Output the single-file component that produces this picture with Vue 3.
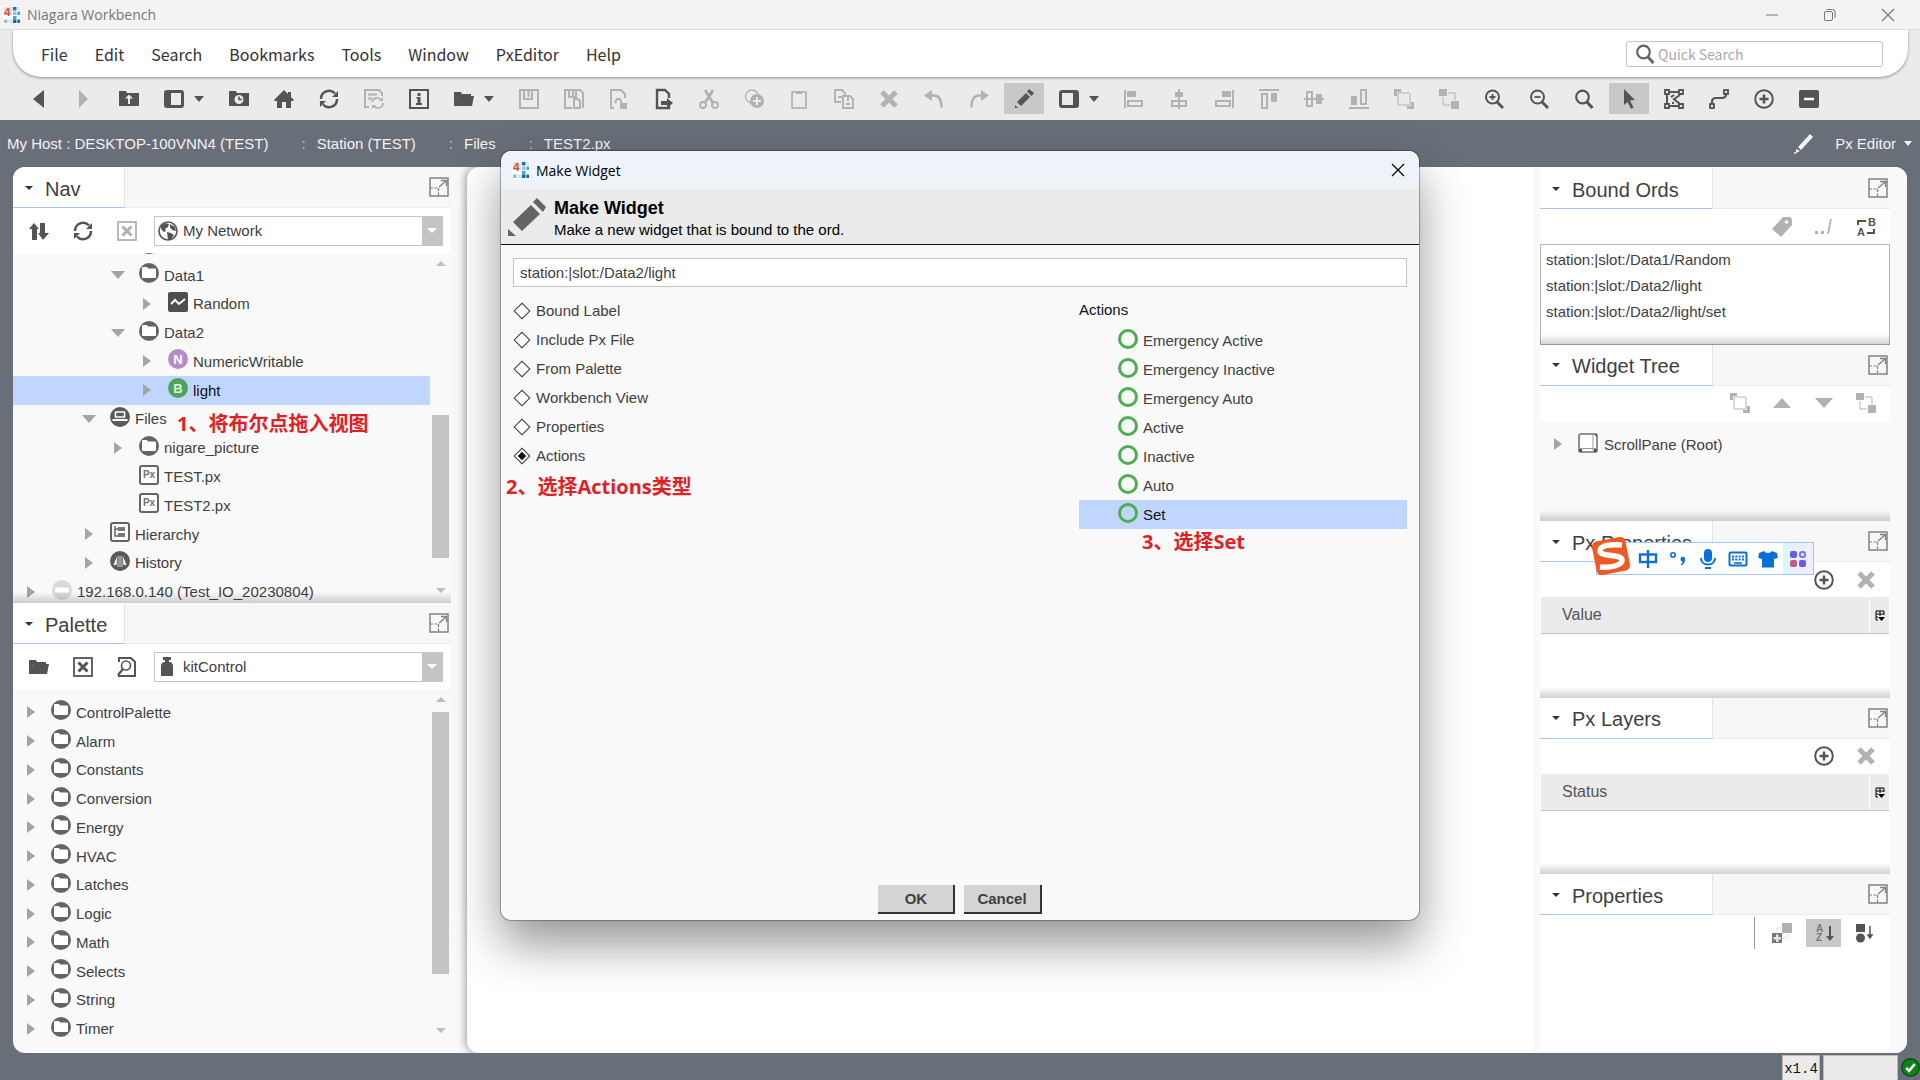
<template>
	<div class="workbench">
		<header class="titlebar">
			<svg class="logo" viewBox="0 0 20 20" v-html="icons.logo"></svg>
			<span class="titlebar-text">Niagara Workbench</span>
			<button class="win-btn" aria-label="Minimize">
				<svg viewBox="0 0 20 20" v-html="icons.minimize"></svg>
			</button>
			<button class="win-btn" aria-label="Restore">
				<svg viewBox="0 0 20 20" v-html="icons.restore"></svg>
			</button>
			<button class="win-btn" aria-label="Close">
				<svg viewBox="0 0 20 20" v-html="icons.close"></svg>
			</button>
		</header>

		<div class="top">
			<nav class="menubar">
				<button v-for="item in menus" :key="item">{{ item }}</button>
				<label class="search">
					<svg class="icon" viewBox="0 0 20 20" v-html="icons.search"></svg>
					<input type="text" placeholder="Quick Search" aria-label="Quick Search" />
				</label>
			</nav>
			<div class="toolbar">
				<template v-for="tool in tools" :key="tool.icon">
					<button
						class="tool"
						:class="{ off: tool.off, pressed: tool.pressed }"
						:aria-label="tool.icon"
					>
						<svg class="icon" viewBox="0 0 20 20" v-html="icons[tool.icon]"></svg>
					</button>
					<button v-if="tool.menu" class="caret-btn" aria-label="More">
						<svg viewBox="0 0 10 6"><path d="M0 0h10L5 6z" fill="currentColor" /></svg>
					</button>
				</template>
			</div>
		</div>

		<div class="locator">
			<template v-for="(part, index) in path" :key="part">
				<span v-if="index" class="sep">:</span>
				<a href="#">{{ part }}</a>
			</template>
			<button class="view-btn">
				<svg class="icon" viewBox="0 0 20 20" v-html="icons.pen"></svg>
				<span>Px Editor</span>
				<svg class="view-caret" viewBox="0 0 8 5"><path d="M0 0h8L4 5z" fill="currentColor" /></svg>
			</button>
		</div>

		<main class="workspace">
			<aside class="left">
				<section class="pane nav-pane">
					<div class="pane-header">
						<button class="tab"><i class="tab-caret"></i>Nav</button>
						<button class="expand" aria-label="Expand">
							<svg class="icon" viewBox="0 0 20 20" v-html="icons.expand"></svg>
						</button>
					</div>
					<div class="pane-tools">
						<button aria-label="Sort"><svg class="icon" viewBox="0 0 20 20" v-html="icons.updown"></svg></button>
						<button aria-label="Refresh"><svg class="icon" viewBox="0 0 20 20" v-html="icons.refresh"></svg></button>
						<button class="off" aria-label="Close"><svg class="icon" viewBox="0 0 20 20" v-html="icons.boxx"></svg></button>
						<label class="combo">
							<svg class="icon" viewBox="0 0 20 20" v-html="icons.globe"></svg>
							<select aria-label="Tree"><option>My Network</option></select>
							<span class="combo-arrow"></span>
						</label>
					</div>
					<div class="list">
						<ul class="tree nav-tree">
							<li
								v-for="node in navTree"
								:key="node.label"
								:class="{ selected: node.selected }"
								:style="{ paddingLeft: 8 + node.level * 29 + 'px' }"
							>
								<span class="twisty" :class="node.state"></span>
								<svg class="icon" viewBox="0 0 20 20" v-html="icons[node.icon]"></svg>
								<span>{{ node.label }}</span>
							</li>
						</ul>
						<div class="scroll">
							<span class="up"></span>
							<span class="thumb nav-thumb"></span>
							<span class="down"></span>
						</div>
					</div>
				</section>
				<section class="pane palette-pane">
					<div class="pane-header">
						<button class="tab"><i class="tab-caret"></i>Palette</button>
						<button class="expand" aria-label="Expand">
							<svg class="icon" viewBox="0 0 20 20" v-html="icons.expand"></svg>
						</button>
					</div>
					<div class="pane-tools">
						<button aria-label="Open"><svg class="icon" viewBox="0 0 20 20" v-html="icons.open"></svg></button>
						<button aria-label="Close palette"><svg class="icon" viewBox="0 0 20 20" v-html="icons.boxx"></svg></button>
						<button aria-label="Find"><svg class="icon" viewBox="0 0 20 20" v-html="icons.finddoc"></svg></button>
						<label class="combo">
							<svg class="icon" viewBox="0 0 20 20" v-html="icons.jar"></svg>
							<select aria-label="Palette"><option>kitControl</option></select>
							<span class="combo-arrow"></span>
						</label>
					</div>
					<div class="list">
						<ul class="tree palette-tree">
							<li v-for="name in palette" :key="name">
								<span class="twisty closed"></span>
								<svg class="icon" viewBox="0 0 20 20" v-html="icons.folder"></svg>
								<span>{{ name }}</span>
							</li>
						</ul>
						<div class="scroll palette-scroll">
							<span class="up"></span>
							<span class="thumb palette-thumb"></span>
							<span class="down"></span>
						</div>
					</div>
				</section>
			</aside>

			<div class="canvas"></div>

			<aside class="right">
				<section v-for="side in sides" :key="side.title" class="side">
					<div class="pane-header">
						<button class="tab"><i class="tab-caret"></i>{{ side.title }}</button>
						<button class="expand" aria-label="Expand">
							<svg class="icon" viewBox="0 0 20 20" v-html="icons.expand"></svg>
						</button>
					</div>
					<div class="side-tools" :class="{ ruled: side.ruled }">
						<button
							v-for="tool in side.tools"
							:key="tool.icon"
							:class="{ off: tool.off, pressed: tool.pressed }"
							:aria-label="tool.icon"
						>
							<svg class="icon" viewBox="0 0 20 20" v-html="icons[tool.icon]"></svg>
						</button>
					</div>
					<ul v-if="side.ords" class="ords">
						<li v-for="ord in side.ords" :key="ord">{{ ord }}</li>
					</ul>
					<div v-else-if="side.root" class="widget-tree">
						<span class="twisty closed"></span>
						<svg class="icon" viewBox="0 0 20 20" v-html="icons.scrollpane"></svg>
						<span>{{ side.root }}</span>
					</div>
					<table v-else-if="side.column">
						<thead>
							<tr>
								<th>{{ side.column }}</th>
								<th class="opts">
									<button aria-label="Table options">
										<svg viewBox="0 0 10 11" v-html="icons.tableopts"></svg>
									</button>
								</th>
							</tr>
						</thead>
					</table>
				</section>
			</aside>
		</main>

		<footer class="statusbar">
			<span class="zoom">x1.4</span>
			<span class="field"></span>
			<svg class="ok-mark" viewBox="0 0 20 20" v-html="icons.okmark"></svg>
		</footer>

		<div class="note note-1">1、将布尔点拖入视图</div>

		<div class="ime">
			<svg class="ime-logo" viewBox="0 0 40 40" v-html="icons.sogou"></svg>
			<button v-for="name in ime" :key="name" :class="name" :aria-label="name">
				<svg class="icon" viewBox="0 0 20 20" v-html="icons[name]"></svg>
			</button>
		</div>

		<div class="dialog" role="dialog" aria-label="Make Widget">
			<div class="dialog-title">
				<svg class="logo" viewBox="0 0 20 20" v-html="icons.logo"></svg>
				<span>Make Widget</span>
				<button class="dialog-close" aria-label="Close">
					<svg viewBox="0 0 20 20" v-html="icons.close"></svg>
				</button>
			</div>
			<div class="dialog-head">
				<svg class="head-icon" viewBox="0 0 40 40" v-html="icons.bigpencil"></svg>
				<div>
					<h1>Make Widget</h1>
					<p>Make a new widget that is bound to the ord.</p>
				</div>
			</div>
			<div class="dialog-body">
				<input v-model="ord" class="ord" type="text" aria-label="Ord" />
				<div class="columns">
					<div class="types">
						<label v-for="type in types" :key="type">
							<input v-model="picked" type="radio" name="type" :value="type" />
							{{ type }}
						</label>
					</div>
					<div class="actions">
						<h2>Actions</h2>
						<ul>
							<li
								v-for="action in actions"
								:key="action"
								:class="{ selected: action === current }"
								@click="current = action"
							>
								<i class="ring"></i>{{ action }}
							</li>
						</ul>
					</div>
				</div>
				<div class="buttons">
					<button>OK</button>
					<button>Cancel</button>
				</div>
			</div>
			<div class="note note-2">2、选择Actions类型</div>
			<div class="note note-3">3、选择Set</div>
		</div>
	</div>
</template>

<script setup>
import { ref } from 'vue'

const ord = ref('station:|slot:/Data2/light')
const picked = ref('Actions')
const current = ref('Set')

const menus = ['File', 'Edit', 'Search', 'Bookmarks', 'Tools', 'Window', 'PxEditor', 'Help']
const path = ['My Host : DESKTOP-100VNN4 (TEST)', 'Station (TEST)', 'Files', 'TEST2.px']
const types = ['Bound Label', 'Include Px File', 'From Palette', 'Workbench View', 'Properties', 'Actions']
const actions = [
	'Emergency Active',
	'Emergency Inactive',
	'Emergency Auto',
	'Active',
	'Inactive',
	'Auto',
	'Set',
]
const palette = [
	'ControlPalette',
	'Alarm',
	'Constants',
	'Conversion',
	'Energy',
	'HVAC',
	'Latches',
	'Logic',
	'Math',
	'Selects',
	'String',
	'Timer',
]
const ime = ['zhong', 'punct', 'mic', 'keyboard', 'shirt', 'apps']

const tools = [
	{ icon: 'back' },
	{ icon: 'forward', off: true },
	{ icon: 'uplevel' },
	{ icon: 'sidebar', menu: true },
	{ icon: 'recent' },
	{ icon: 'home' },
	{ icon: 'refresh' },
	{ icon: 'docrefresh', off: true },
	{ icon: 'info' },
	{ icon: 'open', menu: true },
	{ icon: 'save', off: true },
	{ icon: 'savebog', off: true },
	{ icon: 'export', off: true },
	{ icon: 'exportdoc' },
	{ icon: 'cut', off: true },
	{ icon: 'duplicate', off: true },
	{ icon: 'paste', off: true },
	{ icon: 'copy', off: true },
	{ icon: 'delete', off: true },
	{ icon: 'undo', off: true },
	{ icon: 'redo', off: true },
	{ icon: 'pencil', pressed: true },
	{ icon: 'rightbar', menu: true },
	{ icon: 'alignleft', off: true },
	{ icon: 'aligncenter', off: true },
	{ icon: 'alignright', off: true },
	{ icon: 'aligntop', off: true },
	{ icon: 'alignmiddle', off: true },
	{ icon: 'alignbottom', off: true },
	{ icon: 'tofront', off: true },
	{ icon: 'toback', off: true },
	{ icon: 'zoomin' },
	{ icon: 'zoomout' },
	{ icon: 'search' },
	{ icon: 'pointer', pressed: true },
	{ icon: 'polygon' },
	{ icon: 'curve' },
	{ icon: 'add' },
	{ icon: 'remove' },
]

const navTree = [
	{ label: '', icon: 'folder', level: 3 },
	{ label: 'Data1', icon: 'folder', level: 3, state: 'opened' },
	{ label: 'Random', icon: 'wave', level: 4, state: 'closed' },
	{ label: 'Data2', icon: 'folder', level: 3, state: 'opened' },
	{ label: 'NumericWritable', icon: 'numeric', level: 4, state: 'closed' },
	{ label: 'light', icon: 'bool', level: 4, state: 'closed', selected: true },
	{ label: 'Files', icon: 'files', level: 2, state: 'opened' },
	{ label: 'nigare_picture', icon: 'folder', level: 3, state: 'closed' },
	{ label: 'TEST.px', icon: 'px', level: 3 },
	{ label: 'TEST2.px', icon: 'px', level: 3 },
	{ label: 'Hierarchy', icon: 'hierarchy', level: 2, state: 'closed' },
	{ label: 'History', icon: 'history', level: 2, state: 'closed' },
	{ label: '192.168.0.140 (Test_IO_20230804)', icon: 'host', level: 0, state: 'closed' },
]

const sides = [
	{
		title: 'Bound Ords',
		tools: [{ icon: 'tag', off: true }, { icon: 'relative', off: true }, { icon: 'replace' }],
		ords: ['station:|slot:/Data1/Random', 'station:|slot:/Data2/light', 'station:|slot:/Data2/light/set'],
	},
	{
		title: 'Widget Tree',
		tools: [
			{ icon: 'tofront', off: true },
			{ icon: 'moveup', off: true },
			{ icon: 'movedown', off: true },
			{ icon: 'toback', off: true },
		],
		root: 'ScrollPane (Root)',
	},
	{ title: 'Px Properties', tools: [{ icon: 'add' }, { icon: 'delete', off: true }], column: 'Value' },
	{ title: 'Px Layers', tools: [{ icon: 'add' }, { icon: 'delete', off: true }], column: 'Status' },
	{
		title: 'Properties',
		ruled: true,
		tools: [{ icon: 'addslot', off: true }, { icon: 'sortaz', pressed: true }, { icon: 'sorttype' }],
	},
]

const icons = {
	logo: '<rect width="20" height="20" fill="#fff"/><path d="M11 1h4v4h-4z" fill="#1478b8"/><path d="M1 1h9v9H1z" fill="#e3dcdc"/><path d="M11 6h4v4h-4zM1 15h4v4H1z" fill="#8cc3e0"/><path d="M16 1h3v4h-3zM6 15h4v4H6z" fill="#d5e6ef"/><path d="M16 6h3v4h-3zM11 11h4v4h-4z" fill="#4fa3d0"/><path d="M11 15h4v4h-4zM16 15h3v4h-3z" fill="#1068a8"/><text x="1" y="11" font-family="Liberation Sans" font-size="13" font-weight="bold" fill="#d84b4b">4</text>',
	minimize: '<path d="M4 10h12" stroke="#777" fill="none"/>',
	restore: '<g fill="none" stroke="#777"><rect x="4.500" y="6.500" width="8" height="9" rx="1.500"/><path d="M6.500 4.500h6a2.500 2.500 0 0 1 2.500 2.500v6"/></g>',
	close: '<path d="M4 4l12 12M16 4L4 16" stroke="currentColor" stroke-width="1.200" fill="none"/>',
	search: '<circle cx="8.500" cy="8" r="6.300" fill="none" stroke="currentColor" stroke-width="2.200"/><path d="M13 13l5.500 6" stroke="currentColor" stroke-width="3"/>',
	back: '<path d="M15 1v18L4 10z" fill="currentColor"/>',
	forward: '<path d="M5 1v18l9-9z" fill="currentColor"/>',
	uplevel: '<path d="M0 2h7l1 2h12v13H0z" fill="currentColor"/><path d="M10 5.500l4 4h-3V15H9V9.500H6z" fill="#ebebeb"/>',
	sidebar: '<rect x="1.500" y="2.500" width="17" height="15" rx="1.500" fill="none" stroke="currentColor" stroke-width="3"/><path d="M2 2h5v16H2z" fill="currentColor"/>',
	rightbar: '<rect x="1.500" y="2.500" width="17" height="15" rx="1.500" fill="none" stroke="currentColor" stroke-width="3"/><path d="M14 2h5v16h-5z" fill="currentColor"/>',
	recent: '<path d="M0 2h7l1 2h12v13H0z" fill="currentColor"/><circle cx="10" cy="10.500" r="4.500" fill="#ebebeb"/><path d="M10 7.500v3h3" stroke="currentColor" stroke-width="1.500" fill="none"/>',
	home: '<path d="M10 1l4 4V3h3v5l3 3-1 1h-2v7h-5v-6H8v6H3v-7H1l-1-1z" fill="currentColor"/>',
	refresh: '<g fill="none" stroke="currentColor" stroke-width="2.500"><path d="M2 10a8 8 0 0 1 14-5.500"/><path d="M18 10a8 8 0 0 1-14 5.500"/></g><path d="M19 2v6h-6zM1 18v-6h6z" fill="currentColor"/>',
	docrefresh: '<path d="M5 18H1V1h14l3 3v3M4 5.500h9M4 9.500h4" fill="none" stroke="currentColor" stroke-width="2"/><path d="M8 13a5 5 0 0 1 9-2M19 14a5 5 0 0 1-9 3" fill="none" stroke="currentColor" stroke-width="1.800"/><path d="M19 8v4h-4zM8 20v-4h4z" fill="currentColor"/>',
	info: '<rect x="1" y="1" width="18" height="18" fill="none" stroke="currentColor" stroke-width="2"/><path d="M8.500 4h3v3h-3zM7.500 8h4v6H13v2H7v-2h1.500v-4.500h-1z" fill="currentColor"/>',
	open: '<path d="M0 3h7l1 2h9v2H4L2 17H0z" fill="currentColor"/><path d="M4 7h16l-2 10H1z" fill="currentColor"/>',
	save: '<path d="M1 1h18v18H1zM5 1v9h8V1M9.500 2v6" fill="none" stroke="currentColor" stroke-width="2"/>',
	savebog: '<path d="M8 19H1V1h15l3 3v15M5 1v7h7V1M9 2v5" fill="none" stroke="currentColor" stroke-width="2"/><path d="M10 10h4l2 2v7h-6z" fill="none" stroke="currentColor" stroke-width="2"/>',
	export: '<path d="M5 19H2V1h10l4 4v4M6 14l2-4h3l2 5" fill="none" stroke="currentColor" stroke-width="2"/><path d="M11 14h7v6h-7z" fill="currentColor"/>',
	exportdoc: '<path d="M15 9V5l-4-4H3v18h12v-3" fill="none" stroke="currentColor" stroke-width="2.400"/><path d="M7 12h6V9l6 5-6 5v-3H7z" fill="currentColor"/>',
	cut: '<g fill="none" stroke="currentColor" stroke-width="2"><circle cx="4" cy="16" r="3"/><circle cx="16" cy="16" r="3"/><path d="M6 14l8-13M14 14L6 1" stroke-width="2.800"/></g>',
	duplicate: '<circle cx="8" cy="7.500" r="6.500" fill="none" stroke="currentColor" stroke-width="1.300"/><circle cx="13" cy="12" r="7" fill="currentColor"/><path d="M13 8v8M9 12h8" stroke="#ebebeb" stroke-width="2"/>',
	paste: '<rect x="3" y="3" width="14" height="16" fill="none" stroke="currentColor" stroke-width="1.700"/><path d="M7 2h6v3H7z" fill="currentColor"/>',
	copy: '<g fill="none" stroke="currentColor" stroke-width="1.800"><path d="M7 13H1V1h7l3 3v3"/><path d="M9 7h7l3 3v9H9zM14 7v5"/><path d="M4 8h4M12 15h4"/></g>',
	delete: '<path d="M3 3l14 14M17 3L3 17" stroke="currentColor" stroke-width="5" fill="none"/>',
	undo: '<path d="M4 6.500h6c5 0 7.500 4 7.500 12" fill="none" stroke="currentColor" stroke-width="2.400"/><path d="M8 1v11L0 6.500z" fill="currentColor"/>',
	redo: '<path d="M16 6.500h-6c-5 0-7.500 4-7.500 12" fill="none" stroke="currentColor" stroke-width="2.400"/><path d="M12 1v11l8-5.500z" fill="currentColor"/>',
	pencil: '<path d="M12 4l4 4-9 9-4-4zM13 2.500L15 0l5 4-2.500 3zM1 19v-3l3 3z" fill="currentColor"/>',
	pen: '<path d="M16 0l3 3L7 16l-3-3z" fill="currentColor"/><path d="M2 15l4 2-4 2z" fill="currentColor"/><circle cx="1" cy="19" r="1" fill="currentColor"/>',
	bigpencil: '<path d="M24 8l9 9-18 17-9-9zM26 5l4-4 9 9-3 5zM1 39v-7l8 7z" fill="currentColor"/>',
	alignleft: '<path d="M0 1h2v18H0zM3 2h9v6H3z" fill="currentColor"/><path d="M4 12h14v5H4z" fill="none" stroke="currentColor" stroke-width="2"/>',
	aligncenter: '<path d="M9 0h2v20H9zM6 3h8v5H6z" fill="currentColor"/><path d="M3 12h14v5H3z" fill="none" stroke="currentColor" stroke-width="2"/>',
	alignright: '<path d="M18 1h2v18h-2zM8 2h9v6H8z" fill="currentColor"/><path d="M2 12h14v5H2z" fill="none" stroke="currentColor" stroke-width="2"/>',
	aligntop: '<path d="M0 0h20v2H0zM12 4h6v9h-6z" fill="currentColor"/><path d="M3 5h5v14H3z" fill="none" stroke="currentColor" stroke-width="2"/>',
	alignmiddle: '<path d="M0 9h20v2H0zM12 5h6v10h-6z" fill="currentColor"/><path d="M3 3h5v14H3z" fill="none" stroke="currentColor" stroke-width="2"/>',
	alignbottom: '<path d="M0 18h20v2H0zM2 7h6v9H2z" fill="currentColor"/><path d="M12 1h5v14h-5z" fill="none" stroke="currentColor" stroke-width="2"/>',
	tofront: '<path d="M0 0h7v3H3v4H0zM20 20h-7v-3h4v-4h3z" fill="currentColor"/><rect x="4" y="4" width="12" height="12" rx="1" fill="none" stroke="currentColor"/>',
	toback: '<path d="M0 0h8v7H0zM12 12h8v8h-8z" fill="currentColor"/><path d="M9 4h7v7M4 8v8h7" fill="none" stroke="currentColor"/>',
	zoomin: '<circle cx="8.500" cy="8" r="6.500" fill="none" stroke="currentColor" stroke-width="2"/><path d="M13 13l6 6" stroke="currentColor" stroke-width="2.800"/><path d="M8.500 5v6M5.500 8h6" stroke="currentColor" stroke-width="1.800"/>',
	zoomout: '<circle cx="8.500" cy="8" r="6.500" fill="none" stroke="currentColor" stroke-width="2"/><path d="M13 13l6 6" stroke="currentColor" stroke-width="2.800"/><path d="M5.500 8h6" stroke="currentColor" stroke-width="1.800"/>',
	pointer: '<path d="M5 0l11 11-5 .5 3.500 7-2.500 1.200L8.500 13 5 16z" fill="currentColor"/>',
	polygon: '<g fill="none" stroke="currentColor" stroke-width="2"><path d="M3 5v11M5 3h10M5 17h10M16 6l-6 4 6 5"/><path d="M7 8l3-2M8 14h2"/><path d="M1 1h4v4H1zM15 1h4v4h-4zM1 15h4v4H1zM15 15h4v4h-4z" stroke-width="1.800"/></g>',
	curve: '<g fill="none" stroke="currentColor"><path d="M3 15c0-4 0-6 4-6h5c5 0 5-2 5-5" stroke-width="2.200"/><rect x="1" y="15" width="4" height="4" stroke-width="1.800"/><rect x="15" y="1" width="4" height="4" stroke-width="1.800"/></g>',
	add: '<circle cx="10" cy="10" r="8.800" fill="none" stroke="currentColor" stroke-width="2"/><path d="M10 5.500v9M5.500 10h9" stroke="currentColor" stroke-width="2.500"/>',
	remove: '<rect x="0" y="1" width="20" height="18" rx="2" fill="currentColor"/><path d="M5 10h10" stroke="#fff" stroke-width="2.500"/>',
	expand: '<g fill="none" stroke="#828282"><rect x="1" y="1" width="18" height="18" stroke-width="1.500"/><path d="M10 10l7-6M12 3.500h5.500V9" stroke-width="1.300"/><path d="M1 11h9M9.500 11v8" stroke-dasharray="3 1.500" stroke-width="1.200"/></g>',
	updown: '<path d="M5 2l5 6H8v11H3V8H0zM11 2h5v10h4l-6 7-5-7h2z" fill="currentColor"/>',
	boxx: '<rect x="1" y="1" width="18" height="18" fill="none" stroke="currentColor" stroke-width="1.800"/><path d="M5.500 5.500l9 9M14.500 5.500l-9 9" stroke="currentColor" stroke-width="3"/>',
	globe: '<circle cx="10" cy="10" r="9" fill="#fff" stroke="currentColor" stroke-width="1.600"/><path d="M3 5l4-3 4 1-1 3-3 2 1 2-2 1-3-3zM12 3l5 3 1 4-4-1-2-3zM9 11l4 1 3 2-3 4-3 1z" fill="currentColor"/>',
	finddoc: '<path d="M2 5V1h12l4 4v14h-6" fill="none" stroke="currentColor" stroke-width="2"/><circle cx="9" cy="8.500" r="4.500" fill="none" stroke="currentColor" stroke-width="1.600"/><path d="M6 12l-5 6" stroke="currentColor" stroke-width="2.200"/><path d="M1 19h12" stroke="currentColor" stroke-width="2"/>',
	jar: '<path d="M5 0h8v3h-2v2c3 0 4 2 4 4v10H3V9c0-2 1-4 4-4V3H5z" fill="currentColor"/>',
	folder: '<circle cx="10" cy="10" r="10" fill="#646464"/><path d="M3.500 4.500h4.500l1 1.500h7.500v8.500h-13z" fill="#fff" stroke="#fff" stroke-linejoin="round" stroke-width="1"/>',
	wave: '<rect width="20" height="20" rx="2" fill="#4e4e4e"/><path d="M3 12l4-4 4 4 6-5" fill="none" stroke="#fff" stroke-width="2"/>',
	numeric: '<circle cx="10" cy="10" r="10" fill="#b28dca"/><text x="10" y="14.500" text-anchor="middle" font-family="Liberation Sans" font-weight="bold" font-size="13" fill="#fff">N</text>',
	bool: '<circle cx="10" cy="10" r="10" fill="#4da35c"/><text x="10" y="14.500" text-anchor="middle" font-family="Liberation Sans" font-weight="bold" font-size="13" fill="#d9f3dc">B</text>',
	files: '<circle cx="10" cy="10" r="10" fill="#5b5b5b"/><path d="M5.500 5h9v5h-9z" fill="none" stroke="#fff" stroke-width="1.500"/><path d="M2.500 12h15v2h-15z" fill="#fff"/>',
	px: '<rect x="1" y="1" width="18" height="18" rx="2" fill="#fff" stroke="#646464" stroke-width="2"/><text x="10" y="13" text-anchor="middle" font-family="Liberation Sans" font-weight="bold" font-size="10" fill="#707070">Px</text>',
	hierarchy: '<rect x="1" y="1" width="18" height="18" rx="2" fill="#fff" stroke="#646464" stroke-width="2"/><path d="M5 4v10h3M5 7h3" fill="none" stroke="#646464" stroke-width="1.500"/><path d="M8 5h7v4H8zM8 11h7v4H8z" fill="#777"/>',
	history: '<circle cx="10" cy="10" r="10" fill="#5b5b5b"/><path d="M7.500 4.500L3.500 14h3zM12.500 4.500l4 9.500h-3z" fill="#fff"/><path d="M8 5h4l1 11H7z" fill="#999"/>',
	host: '<circle cx="10" cy="10" r="10" fill="#dadada"/><rect x="3" y="7.500" width="14" height="5" rx="1" fill="#fff"/>',
	scrollpane: '<rect x="1" y="1" width="18" height="18" rx="1.500" fill="#fff" stroke="#707070" stroke-width="1.600"/><path d="M15 1v18M1 15.500h18" stroke="#999" stroke-width="1"/><path d="M16 1h3v3zM1 16h3v3H1zM16 16h3v3h-3z" fill="#555"/>',
	tag: '<path d="M11 0h7l2 2v6L9 20l-9-8z" fill="currentColor"/><circle cx="14.500" cy="5" r="1.800" fill="#fff"/>',
	relative: '<path d="M1 14h3v3H1zM7 14h3v3H7z" fill="currentColor"/><path d="M17 2l-3 15" stroke="currentColor" stroke-width="1.800"/>',
	replace: '<path d="M2 8V4h8M11 16h7v-4" fill="none" stroke="currentColor" stroke-width="2"/><g font-family="Liberation Sans" font-weight="bold" font-size="11" fill="currentColor"><text x="12" y="9">B</text><text x="1" y="19">A</text></g>',
	moveup: '<path d="M1 15h18L10 5z" fill="currentColor"/>',
	movedown: '<path d="M1 5h18l-9 10z" fill="currentColor"/>',
	addslot: '<path d="M10 0h10v10H10z" fill="currentColor"/><path d="M5 9V5h4M15 11v4h-4" fill="none" stroke="#ddd"/><path d="M0 10h10v10H0z" fill="#777"/><path d="M4 11.500h2.500v2.500H9v2.500H6.500V19H4v-2.500H1.500V14H4z" fill="#e6e2f2"/>',
	sortaz: '<g font-family="Liberation Sans" font-weight="bold" font-size="10" fill="#777"><text x="2" y="9">A</text><text x="2" y="18">Z</text></g><path d="M15 3v10h-3l4 5 4-5h-3V3z" fill="#555"/>',
	sorttype: '<path d="M0 1h9v8H0z" fill="currentColor"/><circle cx="4.500" cy="15" r="4.500" fill="currentColor"/><path d="M14 3v9M12 12l2 3 2-3z" stroke="currentColor" stroke-width="1.500" fill="currentColor"/>',
	tableopts: '<path d="M1 10V1h8v4M1 4h8M5 1v5M1 7h2M1 10h2" fill="none" stroke="#000"/><path d="M3 7h7l-3.500 4z" fill="#000"/>',
	okmark: '<circle cx="10" cy="10" r="9.200" fill="#0c8416" stroke="#0b4d10" stroke-width="1.500"/><path d="M5.500 10.500l3 3 6-7" fill="none" stroke="#fff" stroke-width="2.600"/>',
	sogou: '<rect x="3" y="3" width="34" height="34" rx="5" fill="#f05a22" transform="rotate(-11 20 20)"/><path d="M31 9C20 8 9 9 9 15c0 6 22 3 22 9 0 5-10 8-22 7" fill="none" stroke="#fff" stroke-width="5.500"/>',
	zhong: '<path d="M10 1v18" stroke="#0a6fd6" stroke-width="2.400"/><rect x="2" y="5.500" width="16" height="7.500" fill="none" stroke="#0a6fd6" stroke-width="2.400"/>',
	punct: '<circle cx="5" cy="6" r="2.200" fill="none" stroke="#0a6fd6" stroke-width="1.600"/><path d="M12.500 10a2.300 2.300 0 0 1 4.600 0c0 3-1 5-3.600 6.500l-.8-.8c1.200-1 1.800-2 1.800-3.200-1.200 0-2-1.200-2-2.500z" fill="#0a6fd6"/>',
	mic: '<rect x="6" y="0" width="8" height="13" rx="4" fill="#0a6fd6"/><path d="M3 9c0 4 3 6.500 7 6.500S17 13 17 9M7 19h6" fill="none" stroke="#0a6fd6" stroke-width="2"/>',
	keyboard: '<rect x="1.500" y="3.500" width="17" height="13" rx="1.500" fill="none" stroke="#0a6fd6" stroke-width="2"/><path d="M4 7.500h12M4 10.500h12" stroke="#0a6fd6" stroke-width="1.800" stroke-dasharray="2 1.300"/><path d="M6 14h8" stroke="#0a6fd6" stroke-width="1.600"/>',
	shirt: '<path d="M6 2c2 2.500 6 2.500 8 0l5 2 .8 5-3.800 1v8.500H4V10L.2 9 1 4z" fill="#0a6fd6"/>',
	apps: '<rect x="2" y="2" width="7" height="7" rx="2" fill="#6a5ae8"/><rect x="2" y="11" width="7" height="7" rx="2" fill="#c25a8c"/><rect x="11" y="11" width="7" height="7" rx="2" fill="#6a5ae8"/><rect x="12" y="3" width="5" height="5" rx="2" fill="none" stroke="#6a78f0" stroke-width="2"/>',
}
</script>

<style>
body {
	margin: 0;
}
</style>

<style scoped>
.workbench {
	position: relative;
	display: flex;
	flex-direction: column;
	height: 100vh;
	overflow: hidden;
	background: #696f79;
	color: #404040;
	font-family: 'Liberation Sans', Arial, sans-serif;
	font-size: 15px;
}

button,
input,
select {
	margin: 0;
	padding: 0;
	border: 0;
	background: none;
	color: inherit;
	font: inherit;
}

ul {
	margin: 0;
	padding: 0;
	list-style: none;
}

a {
	color: inherit;
	text-decoration: none;
}

.icon {
	display: block;
	flex: none;
	width: 20px;
	height: 20px;
	overflow: visible;
}

.off {
	color: #b2b2b2;
}

/* Title bar */
.titlebar {
	display: flex;
	align-items: center;
	height: 29px;
	padding: 0 12px 0 3px;
	background: #f3f3f3;
	border-bottom: 1px solid #dcdcdc;
	color: #777;
	font-family: 'Open Sans', sans-serif;
	font-size: 14px;
}

.logo {
	width: 18px;
	height: 18px;
}

.titlebar-text {
	flex: 1;
	margin-left: 6px;
}

.win-btn {
	width: 40px;
	height: 28px;
	margin-left: 18px;
}

.win-btn svg {
	width: 20px;
	height: 20px;
	vertical-align: middle;
}

/* Menu and toolbar */
.top {
	padding: 0 12px 0 13px;
	background: #ebebeb;
}

.menubar {
	display: flex;
	align-items: center;
	gap: 27px;
	height: 47px;
	padding: 0 25px 0 28px;
	background: #fff;
	border-radius: 0 0 28px 28px;
	box-shadow: 0 1px 3px rgba(0, 0, 0, 0.4);
	clip-path: inset(0 -6px -6px -6px);
	font-family: 'Noto Sans CJK SC', sans-serif;
	font-size: 16px;
	color: #333;
}

.search {
	display: flex;
	align-items: center;
	gap: 3px;
	box-sizing: border-box;
	width: 257px;
	height: 26px;
	margin: 0 0 0 auto;
	padding: 0 8px;
	border: 1px solid #c4c4c4;
	border-radius: 3px;
	color: #646464;
}

.search input {
	flex: 1;
	min-width: 0;
	outline: none;
	font-size: 14px;
}

.search input::placeholder {
	color: #aaa;
	opacity: 1;
}

.toolbar {
	display: flex;
	align-items: center;
	height: 43px;
	padding: 0 6px;
	color: #545454;
}

.tool {
	display: grid;
	place-items: center;
	width: 40px;
	height: 31px;
	margin-right: 5px;
}

.pressed {
	background: #c8c8c8;
}

.caret-btn {
	width: 20px;
	height: 31px;
	margin-left: -5px;
	margin-right: 5px;
	text-align: left;
}

.caret-btn svg {
	display: block;
	width: 10px;
	height: 6px;
}

/* Locator bar */
.locator {
	display: flex;
	align-items: center;
	height: 47px;
	padding: 0 8px 0 7px;
	color: #f2f2f2;
}

.sep {
	margin: 0 11px 0 33px;
	color: #c8c8c8;
}

.view-btn {
	display: flex;
	align-items: center;
	margin-left: auto;
}

.view-btn span {
	margin: 0 8px 0 21px;
}

.view-caret {
	width: 8px;
	height: 5px;
}

/* Workspace */
.workspace {
	display: grid;
	flex: 1;
	grid-template-columns: 454px 1fr 374px;
	min-height: 0;
	margin: 0 13px;
	overflow: hidden;
	background: #f9f9f9;
	border-radius: 12px;
}

.left {
	display: flex;
	flex-direction: column;
	min-height: 0;
	padding-right: 16px;
}

.canvas {
	background: #fff;
	border-radius: 12px 0 0 12px;
	box-shadow: -1px 0 9px rgba(0, 0, 0, 0.4);
}

.right {
	position: relative;
	display: grid;
	grid-template-rows: repeat(5, minmax(0, 1fr));
	padding: 1px 17px 2px 7px;
	background: #f9f9f9;
}

.pane {
	display: flex;
	flex-direction: column;
	min-height: 0;
}

.nav-pane {
	flex: 436 1 0;
}

.palette-pane {
	flex: 450 1 0;
}

.pane-header {
	display: flex;
	align-items: flex-start;
	justify-content: space-between;
	box-sizing: border-box;
	flex: none;
	height: 41px;
	padding-right: 2px;
	background: #f7f7f7;
	border-bottom: 1px solid #ececec;
	border-radius: 12px 0 0 0;
}

.tab {
	display: flex;
	align-items: center;
	box-sizing: border-box;
	width: 112px;
	height: 41px;
	padding: 4px 0 0 12px;
	background: #fff;
	border-right: 1px solid #e4e4e4;
	border-bottom: 1px solid #a9c6ea;
	border-radius: 12px 0 0 0;
	color: #404040;
	font-size: 20px;
}

.right .tab {
	width: 173px;
}

.tab-caret {
	margin: -3px 12px 0 0;
	border: 4px solid transparent;
	border-top-color: #333;
	border-bottom: 0;
}

.expand {
	margin-top: 10px;
}

.pane-tools {
	display: flex;
	align-items: center;
	gap: 24px;
	flex: none;
	height: 45px;
	padding: 0 8px 0 16px;
	background: #fff;
	color: #545454;
}

.pane-tools .off {
	color: #b2b2b2;
}

.combo {
	display: flex;
	align-items: center;
	box-sizing: border-box;
	flex: 1;
	height: 30px;
	margin-left: -7px;
	padding-left: 3px;
	border: 1px solid #c4c4c4;
	background: #fff;
}

.combo select {
	flex: 1;
	align-self: stretch;
	padding-left: 5px;
	appearance: none;
	outline: none;
	color: #404040;
}

.combo-arrow {
	display: grid;
	place-items: center;
	width: 20px;
	height: 28px;
	background: #c4c4c4;
}

.combo-arrow::before {
	content: '';
	border: 5px solid transparent;
	border-top-color: #fff;
	border-bottom: 0;
}

.list {
	display: flex;
	flex: 1;
	min-height: 0;
	overflow: hidden;
	position: relative;
}

.nav-pane .list::after,
.side:not(:last-child)::after {
	content: '';
	position: absolute;
	left: 0;
	right: 0;
	bottom: 0;
	height: 11px;
	background: linear-gradient(rgba(0, 0, 0, 0), rgba(0, 0, 0, 0.18));
}

.tree {
	display: grid;
	grid-auto-rows: minmax(0, 1fr);
	flex: 1;
}

.nav-tree {
	margin: -21px 0 -3px;
}

.palette-tree {
	padding: 9px 0 10px;
}

.tree li {
	display: flex;
	align-items: center;
	padding-left: 8px;
	white-space: nowrap;
}

.tree li .icon {
	margin: 0 5px 4px 10px;
}

.nav-tree li .icon {
	margin-left: 11px;
}

.selected {
	background: #c1d6ff;
	color: #111;
}

.twisty {
	display: grid;
	place-items: center;
	flex: none;
	width: 20px;
}

.closed::before {
	content: '';
	border: 6px solid transparent;
	border-left: 8px solid #a4a4a4;
	border-right: 0;
}

.opened::before {
	content: '';
	border: 7px solid transparent;
	border-top: 8px solid #a4a4a4;
	border-bottom: 0;
}

.scroll {
	display: flex;
	flex-direction: column;
	align-items: center;
	width: 21px;
	padding: 8px 0 10px;
}

.palette-scroll {
	padding-bottom: 20px;
}

.up {
	border: 5px solid transparent;
	border-top: 0;
	border-bottom-color: #bdbdbd;
}

.down {
	margin-top: auto;
	border: 5px solid transparent;
	border-bottom: 0;
	border-top-color: #bdbdbd;
}

.thumb {
	width: 17px;
	background: #c4c4c4;
}

.nav-thumb {
	height: 43%;
	margin-top: 149px;
}

.palette-thumb {
	height: 78%;
	margin-top: 10px;
}

/* Right side bars */
.side {
	position: relative;
	display: flex;
	flex-direction: column;
	background: #fff;
}

.side-tools {
	display: flex;
	align-items: center;
	justify-content: flex-end;
	gap: 7px;
	flex: none;
	height: 35px;
	padding-right: 7px;
	color: #545454;
}

.side-tools button {
	display: grid;
	place-items: center;
	width: 35px;
	height: 28px;
}

.side-tools .off {
	color: #b2b2b2;
}

.ruled::before {
	content: '';
	width: 1px;
	height: 32px;
	margin-right: 2px;
	background: #999;
}

.ords {
	flex: 1;
	padding: 2px 5px;
	border: 1px solid #b8b8b8;
	line-height: 26px;
}

.widget-tree {
	display: flex;
	align-items: flex-start;
	gap: 6px;
	flex: 1;
	padding: 12px 8px;
	line-height: 20px;
	background: #f9f9f9;
}

.widget-tree .twisty {
	height: 22px;
	margin-right: 4px;
}

.widget-tree span:last-child {
	margin-top: 2px;
}

table {
	width: 100%;
	padding: 0 1px;
	border-spacing: 0;
}

th {
	height: 36px;
	padding: 0 0 0 21px;
	background: #ebebeb;
	border-bottom: 1px solid #c2c2b8;
	color: #555;
	font-size: 16px;
	font-weight: normal;
	text-align: left;
}

th.opts {
	width: 19px;
	padding: 0;
	border-left: 1px solid #fff;
	text-align: center;
}

th svg {
	display: block;
	width: 10px;
	height: 11px;
}

th button {
	vertical-align: middle;
}

/* Status bar */
.statusbar {
	display: flex;
	align-items: flex-end;
	justify-content: flex-end;
	gap: 3px;
	flex: none;
	height: 27px;
}

.zoom,
.field {
	box-sizing: border-box;
	height: 25px;
	background: #ebebeb;
	border: 1px solid #bbb;
	border-bottom: 0;
}

.zoom {
	width: 38px;
	color: #111;
	font: 14px/26px 'Liberation Mono', monospace;
	text-align: center;
}

.field {
	width: 75px;
}

.ok-mark {
	width: 19px;
	height: 19px;
	margin-bottom: 3px;
}

/* Tutorial notes */
.note {
	position: absolute;
	color: #e01f26;
	font: bold 20px/28px 'Open Sans', 'Noto Sans CJK SC', sans-serif;
	white-space: nowrap;
}

.note-1 {
	left: 177px;
	top: 410px;
}

.note-2 {
	left: 5px;
	top: 322px;
}

.note-3 {
	left: 641px;
	top: 377px;
}

/* Input method bar */
.ime {
	position: absolute;
	top: 542px;
	right: 106px;
	display: flex;
	align-items: center;
	box-sizing: border-box;
	height: 33px;
	background: #fff;
	border: 1px solid #a9c6ea;
}

.ime-logo {
	width: 40px;
	height: 40px;
	margin: -5px 2px 0 -6px;
}

.ime button {
	display: grid;
	place-items: center;
	width: 30px;
	height: 31px;
}

.ime .apps {
	background: linear-gradient(90deg, #d8f6fa, #f6ecfb);
}

/* Dialog */
.dialog {
	position: absolute;
	top: 151px;
	bottom: 160px;
	left: 50%;
	display: flex;
	flex-direction: column;
	width: 918px;
	transform: translateX(-50%);
	background: #f9f9f9;
	border-radius: 10px;
	box-shadow:
		0 0 1px 1px rgba(0, 0, 0, 0.3),
		0 24px 48px rgba(0, 0, 0, 0.42);
}

.dialog-title {
	display: flex;
	align-items: center;
	gap: 6px;
	height: 38px;
	padding: 0 11px;
	background: #eef3f9;
	border-radius: 10px 10px 0 0;
	color: #000;
	font-family: 'Open Sans', sans-serif;
	font-size: 14px;
}

.dialog-close {
	width: 20px;
	height: 20px;
	margin-left: auto;
}

.dialog-close svg {
	display: block;
}

.dialog-head {
	display: flex;
	align-items: flex-start;
	gap: 7px;
	height: 47px;
	padding: 8px 6px 0;
	background: #ebebeb;
	border-bottom: 1px solid #111;
	color: #000;
}

.head-icon {
	width: 40px;
	height: 40px;
	color: #646464;
}

h1 {
	margin: 0;
	font-size: 18px;
	line-height: 22px;
}

.dialog-head p {
	margin: 0;
	line-height: 22px;
}

.dialog-body {
	display: flex;
	flex-direction: column;
	flex: 1;
	padding: 13px 12px 6px 12px;
}

.ord {
	height: 27px;
	padding: 0 6px;
	border: 1px solid #c4c4c4;
	background: #fff;
	outline: none;
}

.columns {
	display: flex;
	justify-content: space-between;
	flex: 1;
	margin-top: 9px;
}

.types label {
	display: flex;
	align-items: center;
	gap: 8px;
	height: 29px;
	padding-left: 3px;
}

.types input {
	display: grid;
	place-items: center;
	width: 12px;
	height: 12px;
	border: 1px solid #333;
	background: #fff;
	appearance: none;
	transform: rotate(45deg);
}

.types input:checked::before {
	content: '';
	width: 6px;
	height: 6px;
	background: #111;
}

.actions {
	width: 328px;
}

h2 {
	margin: 0 0 2px;
	color: #111;
	font-size: 15px;
	font-weight: normal;
	line-height: 28px;
}

.actions li {
	display: flex;
	align-items: center;
	gap: 5px;
	height: 29px;
	padding-left: 39px;
}

.ring {
	box-sizing: border-box;
	width: 20px;
	height: 20px;
	margin-bottom: 3px;
	border: 3px solid #4cae50;
	border-radius: 50%;
}

.buttons {
	display: flex;
	justify-content: center;
	gap: 9px;
}

.buttons button {
	min-width: 77px;
	height: 29px;
	padding: 0 13px;
	background: #d4d4d4;
	border-right: 2px solid #333;
	border-bottom: 2px solid #333;
	font-weight: bold;
}
</style>
